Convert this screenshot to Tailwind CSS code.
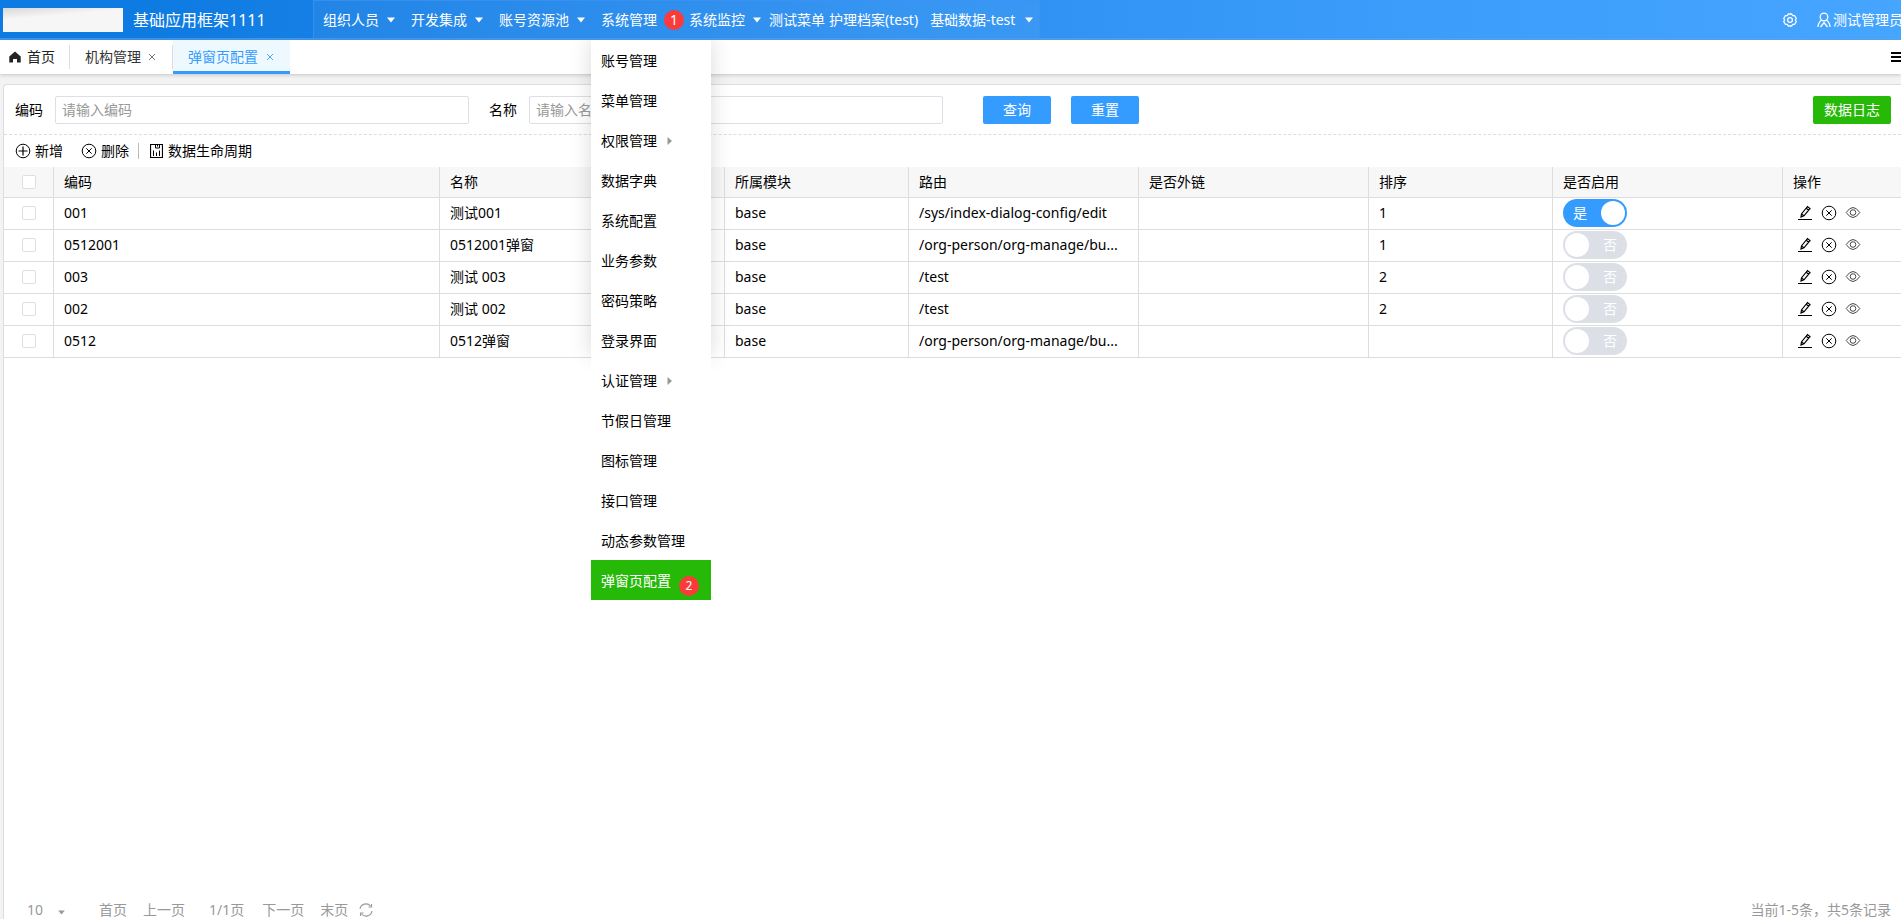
<!DOCTYPE html>
<html lang="zh-CN">
<head>
<meta charset="utf-8">
<title>弹窗页配置</title>
<script src="https://cdn.jsdelivr.net/npm/@tailwindcss/browser@4"></script>
</head>
<body class="min-h-screen flex flex-col bg-[#f3f3f3] text-black text-sm font-['Noto_Sans','Noto_Sans_CJK_SC',sans-serif] overflow-hidden">
<svg class="hidden">
  <symbol id="plus" viewBox="0 0 16 16"><circle cx="8" cy="8" r="6.8" fill="none" stroke="currentColor"/><path d="M8 3.5v9M3.5 8h9" stroke="currentColor" stroke-width="1.2"/></symbol>
  <symbol id="del" viewBox="0 0 16 16"><circle cx="8" cy="8" r="6.8" fill="none" stroke="currentColor"/><path d="M5.3 5.3l5.4 5.4M10.7 5.3l-5.4 5.4" stroke="currentColor"/></symbol>
  <symbol id="edit" viewBox="0 0 16 16"><path d="M1 14.5h14" stroke="currentColor"/><path d="M4 12l.5-3L10.500 1.500l2.500 2L7 10.800zM4.500 9L7 10.800M9.200 3.200l2.500 2" fill="none" stroke="currentColor" stroke-width="1.200"/></symbol>
  <symbol id="eye" viewBox="0 0 16 16"><path d="M1.200 7.500Q8-2.500 14.800 7.500Q8 17.500 1.200 7.500z" fill="none" stroke="currentColor" stroke-width=".9"/><circle cx="8" cy="7.500" r="2.800" fill="none" stroke="currentColor" stroke-width=".9"/></symbol>
  <symbol id="x" viewBox="0 0 8 8"><path d="M1 1l6 6M7 1l-6 6" stroke="currentColor" stroke-width=".9"/></symbol>
  <symbol id="down" viewBox="0 0 8 6"><path d="M0 .5h8L4 5.500z" fill="currentColor"/></symbol>
  <symbol id="right" viewBox="0 0 6 8"><path d="M.5 0v8L5 4z" fill="currentColor"/></symbol>
</svg>

<header class="h-10 shrink-0 flex items-stretch text-white bg-linear-to-r from-[#0d7be2] from-8% via-[#3c9dfb] via-75% to-[#45a5ff] border-b-2 border-[#62acf2]/60">
  <div class="w-[313px] shrink-0 flex items-center gap-2.5 pl-[3px]">
    <div class="w-[120px] h-6 mt-px bg-linear-175 from-[#d8d8d8] via-[#f6f6f6] via-35% to-[#f6f6f6]"></div>
    <h1 class="text-base leading-6 pt-0.5">基础应用框架1111</h1>
  </div>
  <nav class="relative border-x border-t border-[#3f92f5]/70 bg-white/5">
    <ul class="h-full flex items-center pt-px pl-px whitespace-nowrap">
      <li><button class="flex items-center gap-2 px-2">组织人员<svg class="w-2 h-1.5"><use href="#down"/></svg></button></li>
      <li><button class="flex items-center gap-2 px-2">开发集成<svg class="w-2 h-1.5"><use href="#down"/></svg></button></li>
      <li><button class="flex items-center gap-2 px-2">账号资源池<svg class="w-2 h-1.5"><use href="#down"/></svg></button></li>
      <li class="relative self-stretch flex items-center">
        <button class="flex items-center gap-2 px-2">系统管理<svg class="w-2 h-1.5"><use href="#down"/></svg></button>
        <span class="absolute left-[71px] top-2 z-10 size-5 rounded-full bg-[#fb3a3a] text-sm leading-5 text-center">1</span>
        <div class="absolute left-[-2px] top-[38px] z-20 w-[120px] h-[316px] text-black shadow-[0_0_20px_rgba(0,0,0,0.15)] [clip-path:inset(0_-30px_-300px_-30px)]">
          <ul class="bg-white leading-10 [&_a]:h-10 [&_a]:pt-px">
            <li><a href="#" class="block pl-2.5">账号管理</a></li>
            <li><a href="#" class="block pl-2.5">菜单管理</a></li>
            <li><a href="#" class="flex items-center gap-2.5 pl-2.5">权限管理<svg class="w-1.5 h-2 text-[#999]"><use href="#right"/></svg></a></li>
            <li><a href="#" class="block pl-2.5">数据字典</a></li>
            <li><a href="#" class="block pl-2.5">系统配置</a></li>
            <li><a href="#" class="block pl-2.5">业务参数</a></li>
            <li><a href="#" class="block pl-2.5">密码策略</a></li>
            <li><a href="#" class="block pl-2.5">登录界面</a></li>
            <li><a href="#" class="flex items-center gap-2.5 pl-2.5">认证管理<svg class="w-1.5 h-2 text-[#999]"><use href="#right"/></svg></a></li>
            <li><a href="#" class="block pl-2.5">节假日管理</a></li>
            <li><a href="#" class="block pl-2.5">图标管理</a></li>
            <li><a href="#" class="block pl-2.5">接口管理</a></li>
            <li><a href="#" class="block pl-2.5">动态参数管理</a></li>
            <li class="relative"><a href="#" class="block pl-2.5 bg-[#27b908] text-white">弹窗页配置</a><span class="absolute left-[88px] top-4 size-5 rounded-full bg-[#fb3a3a] text-white text-xs leading-5 text-center">2</span></li>
          </ul>
        </div>
      </li>
      <li><button class="flex items-center gap-2 px-2">系统监控<svg class="w-2 h-1.5"><use href="#down"/></svg></button></li>
      <li><button class="pr-1">测试菜单</button></li>
      <li><button class="pr-1">护理档案(test)</button></li>
      <li><button class="flex items-center gap-2.5 pl-2 pr-1.5">基础数据-test<svg class="w-2 h-1.5"><use href="#down"/></svg></button></li>
    </ul>
  </nav>
  <div class="ml-auto -mr-0.5 flex items-center pt-0.5 whitespace-nowrap">
    <button aria-label="设置" class="mr-5"><svg class="size-3.5" viewBox="0 0 14 14" fill="none" stroke="currentColor"><path d="M5.300 1h3.400l1 1.700h2L13.300 5.500 12.300 7l1 1.500-1.600 2.800h-2l-1 1.700H5.300l-1-1.700h-2L.7 8.500 1.700 7l-1-1.500 1.600-2.800h2z" stroke-width="1.300" stroke-linejoin="round"/><circle cx="7" cy="7" r="2.400" stroke-width="1.200"/></svg></button>
    <button class="flex items-center gap-0.5"><svg class="w-3.5 h-4" viewBox="0 0 14 16" fill="none" stroke="currentColor" stroke-width="1.300"><circle cx="7" cy="5" r="3.800"/><path d="M4.500 8.200C2.500 9.500 1.200 12 1 15M9.500 8.200c2 1.300 3.300 3.800 3.500 6.800M3.500 15L7 10.500l3.500 4.500"/></svg>测试管理员</button>
  </div>
</header>

<div class="h-[34px] shrink-0 flex bg-white shadow-[0_1px_4px_rgba(0,0,0,0.2)]">
  <a href="#" class="flex items-center gap-1.5 pl-[9px] pr-[15px] relative after:absolute after:right-0 after:top-[5px] after:h-6 after:w-px after:bg-[#ddd] text-[#222]"><svg class="w-3 h-3" viewBox="0 0 12 12"><path d="M6 .5L.3 5.500V11.500H4V8h4v3.500h3.700v-6z" fill="#222"/></svg>首页</a>
  <a href="#" class="flex items-center gap-[7px] pl-[15px] pr-[17px] relative after:absolute after:right-0 after:top-[5px] after:h-6 after:w-px after:bg-[#ddd] text-[#333]">机构管理<svg class="size-2 text-[#666]"><use href="#x"/></svg></a>
  <a href="#" class="flex items-center gap-2 pl-[15px] pr-4 bg-[#edf8ff] text-[#359cff] border-b-3 border-[#359cff] pt-[3px]">弹窗页配置<svg class="size-2"><use href="#x"/></svg></a>
  <button aria-label="更多" class="ml-auto w-2.5 overflow-hidden"><svg class="w-3.5 h-3" viewBox="0 0 14 12"><path d="M0 2h14M0 6h14M0 10h14" stroke="#000" stroke-width="2"/></svg></button>
</div>

<main class="grow flex flex-col ml-[3px] mt-2.5 bg-white border-l border-t border-[#ddd] rounded-tl">
  <form class="flex items-center h-[50px] px-[11px] border-b border-dashed border-[#ddd] pr-2.5">
    <label for="code" class="w-10">编码</label>
    <input id="code" placeholder="请输入编码" class="w-[414px] h-7 border border-[#dcdfe6] rounded-xs px-1.5 placeholder:text-[#999]">
    <label for="name" class="ml-5 w-10">名称</label>
    <input id="name" placeholder="请输入名称" class="w-[414px] h-7 border border-[#dcdfe6] rounded-xs px-1.5 placeholder:text-[#999]">
    <button type="button" class="ml-10 w-[68px] h-7 rounded-xs bg-[#359cff] text-white">查询</button>
    <button type="button" class="ml-5 w-[68px] h-7 rounded-xs bg-[#359cff] text-white">重置</button>
    <button type="button" class="ml-auto w-[78px] h-7 rounded-xs bg-[#27b908] text-white">数据日志</button>
  </form>
  <div class="flex items-center h-8 pl-[11px]">
    <button class="flex items-center gap-1"><svg class="size-4"><use href="#plus"/></svg>新增</button>
    <button class="flex items-center gap-1 ml-[18px]"><svg class="size-4"><use href="#del"/></svg>删除</button>
    <span class="ml-[9px] w-px h-4 bg-[#bbb]"></span>
    <button class="flex items-center gap-[5px] ml-[11px]"><svg class="w-[13px] h-3.5" viewBox="0 0 13 14" fill="none" stroke="currentColor"><path d="M.5.500h12v13H.5z" stroke-width="1.200"/><path d="M3.500 12V6.500M6.500 12V8.500M9.500 12V6.500M5.500.500v3.500h4V.500M7.500 1v1.500"/></svg>数据生命周期</button>
  </div>
  <table class="w-full table-fixed border-separate border-spacing-0 text-left">
    <colgroup><col class="w-[50px]"><col><col class="w-[285px]"><col class="w-[184px]"><col class="w-[230px]"><col class="w-[230px]"><col class="w-[184px]"><col class="w-[230px]"><col class="w-[118px]"></colgroup>
    <thead>
      <tr class="h-[31px] bg-[#f7f7f7] [&>th]:font-normal [&>th]:border-b [&>th]:border-r [&>th:last-child]:border-r-0 [&>th]:border-[#ddd] [&>th]:px-2.5 [&>th]:py-0">
        <th><input type="checkbox" aria-label="全选" class="block mx-auto appearance-none size-3.5 border border-[#dcdfe6] rounded-xs bg-white"></th><th>编码</th><th>名称</th><th>所属模块</th><th>路由</th><th>是否外链</th><th>排序</th><th>是否启用</th><th>操作</th>
      </tr>
    </thead>
    <tbody id="rows"></tbody>
  </table>
  <footer class="mt-auto flex items-center h-[22px] mb-[-2px] pl-[23px] pr-2.5 text-[#999]">
    <button class="flex items-center gap-[15px]">10<svg class="w-[7px] h-[5px] mt-1"><use href="#down"/></svg></button>
    <button class="ml-[34px]">首页</button>
    <button class="ml-4">上一页</button>
    <span class="ml-6">1/1页</span>
    <button class="ml-[18px]">下一页</button>
    <button class="ml-4">末页</button>
    <button aria-label="刷新" class="ml-[11px]"><svg class="size-3.5" viewBox="0 0 14 14" fill="none" stroke="currentColor" stroke-width="1.100"><path d="M1 6A6 6 0 0 1 11.500 3M13 8A6 6 0 0 1 2.500 11M12.500 1v3H9.500M1.500 13v-3h3"/></svg></button>
    <span class="ml-auto">当前1-5条，共5条记录</span>
  </footer>
</main>
<script>
const data = [
  ['001','测试001','base','/sys/index-dialog-config/edit','','1',true],
  ['0512001','0512001弹窗','base','/org-person/org-manage/bu...','','1',false],
  ['003','测试 003','base','/test','','2',false],
  ['002','测试 002','base','/test','','2',false],
  ['0512','0512弹窗','base','/org-person/org-manage/bu...','','',false]
];
document.getElementById('rows').innerHTML = data.map(r => `
<tr class="h-8 [&>td]:border-b [&>td]:border-r [&>td:last-child]:border-r-0 [&>td]:border-[#ddd] [&>td]:px-2.5 [&>td]:pt-0 [&>td]:pb-0.5">
<td><input type="checkbox" aria-label="选择 ${r[0]}" class="block mx-auto appearance-none size-3.5 border border-[#dcdfe6] rounded-xs"></td>
${r.slice(0,6).map(c => `<td class="truncate">${c}</td>`).join('')}
<td><label class="relative flex items-center justify-between w-16 h-7 rounded-full p-0.5 text-white bg-[#dcdfe6] has-checked:bg-[#359cff] has-checked:flex-row-reverse">
<input type="checkbox" aria-label="是否启用" class="appearance-none size-6 rounded-full bg-white" ${r[6]?'checked':''}><span class="px-2">${r[6]?'是':'否'}</span></label></td>
<td><div class="flex items-center gap-2 pl-1 pt-px">
<button aria-label="编辑"><svg class="size-4"><use href="#edit"/></svg></button>
<button aria-label="删除"><svg class="size-4"><use href="#del"/></svg></button>
<button aria-label="查看"><svg class="size-4 text-[#333]"><use href="#eye"/></svg></button></div></td></tr>`).join('');
</script>
</body>
</html>
